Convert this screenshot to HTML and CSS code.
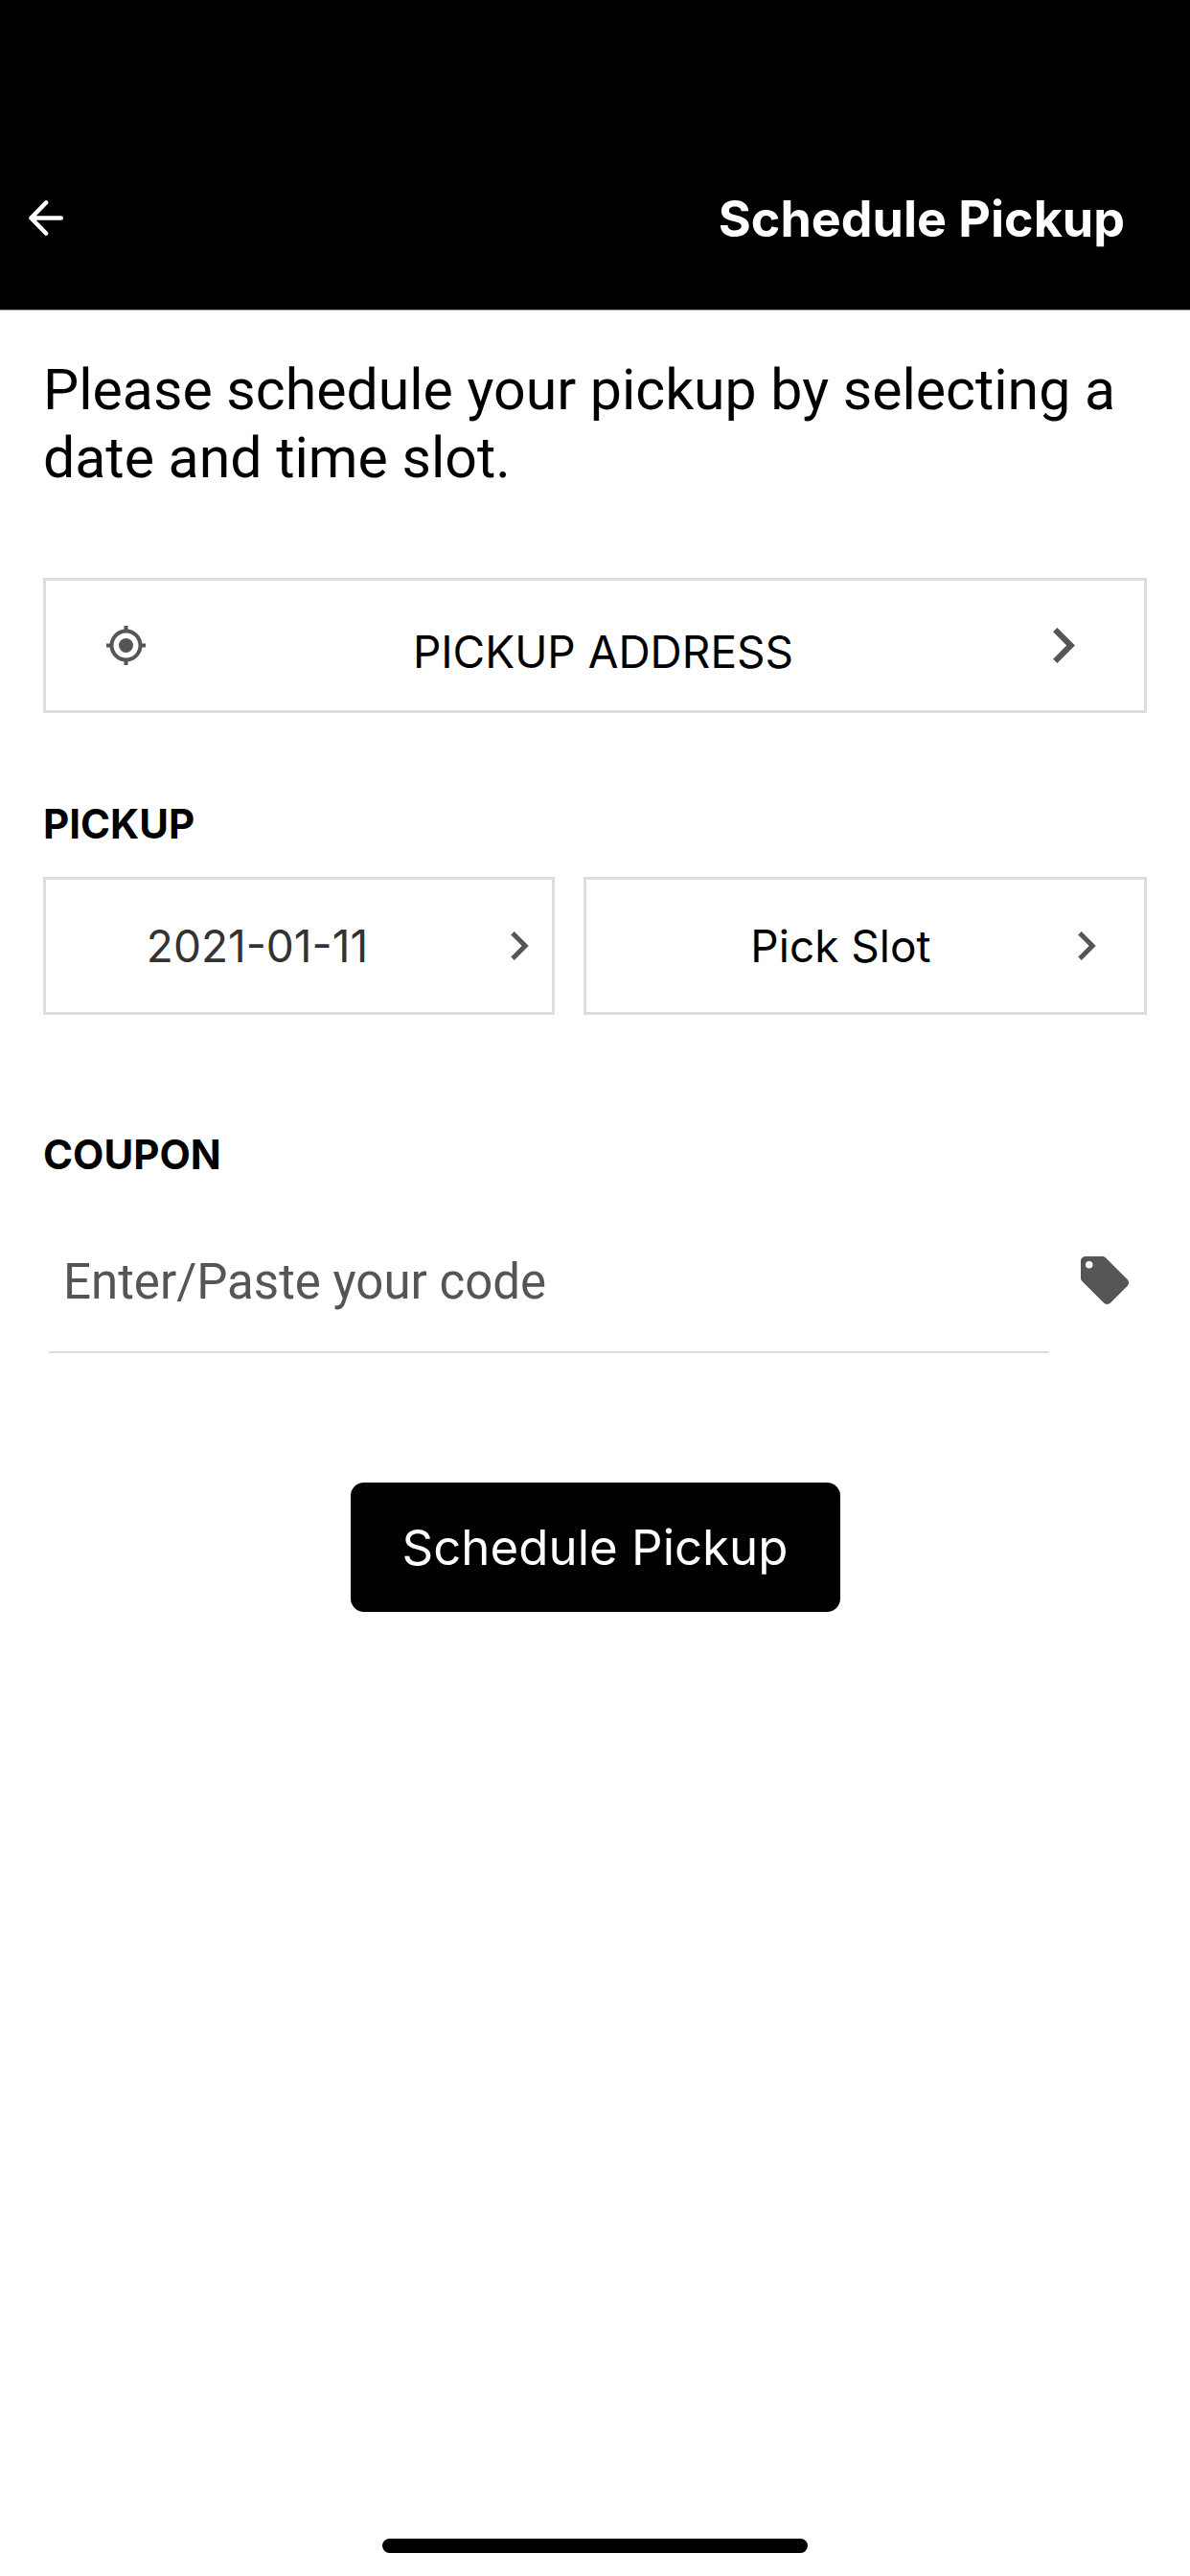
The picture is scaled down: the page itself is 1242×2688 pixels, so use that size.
FILE: index.html
```html
<!DOCTYPE html>
<html lang="en">
<head>
<meta charset="utf-8">
<meta name="viewport" content="width=device-width, initial-scale=1">
<title>Schedule Pickup</title>
<link rel="stylesheet" href="styles.css">
</head>
<body>
<header class="header">
  <button class="icon-button" type="button" aria-label="Back">
    <svg class="icon-back" viewBox="0 0 36 37" aria-hidden="true"><path d="M18 2.5 2.5 18.5 18 34.5M2.5 18.5H33.7"/></svg>
  </button>
  <h1 class="title">Schedule Pickup</h1>
</header>
<main class="content">
  <p class="intro">Please schedule your pickup by selecting a date and time slot.</p>
  <form class="form">
    <button class="picker picker-address" type="button">
      <svg class="icon-locate" viewBox="0 0 41 41" aria-hidden="true"><circle class="ring" cx="20.5" cy="20.5" r="15"/><circle cx="20.5" cy="20.5" r="7.5"/><path d="M18.5 0h4v5h-4zM18.5 36h4v5h-4zM0 18.5h5v4H0zM36 18.5h5v4h-5z"/></svg>
      <span class="picker-label">PICKUP ADDRESS</span>
      <svg class="chevron chevron-large" viewBox="8.59 6 7.41 12" aria-hidden="true"><path d="M8.59 16.59 13.17 12 8.59 7.41 10 6l6 6-6 6z"/></svg>
    </button>
    <section class="group">
      <h2 class="group-title">PICKUP</h2>
      <div class="slots">
        <button class="picker picker-date" type="button">
          <span class="picker-label">2021-01-11</span>
          <svg class="chevron" viewBox="8.59 6 7.41 12" aria-hidden="true"><path d="M8.59 16.59 13.17 12 8.59 7.41 10 6l6 6-6 6z"/></svg>
        </button>
        <button class="picker picker-slot" type="button">
          <span class="picker-label">Pick Slot</span>
          <svg class="chevron" viewBox="8.59 6 7.41 12" aria-hidden="true"><path d="M8.59 16.59 13.17 12 8.59 7.41 10 6l6 6-6 6z"/></svg>
        </button>
      </div>
    </section>
    <section class="group group-coupon">
      <h2 class="group-title"><label for="coupon">COUPON</label></h2>
      <div class="coupon">
        <input class="coupon-input" id="coupon" type="text" placeholder="Enter/Paste your code">
        <svg class="icon-tag" viewBox="2 2 20 20" aria-hidden="true"><path d="M5.5 7A1.5 1.5 0 0 1 4 5.5 1.5 1.5 0 0 1 5.5 4 1.5 1.5 0 0 1 7 5.5 1.5 1.5 0 0 1 5.5 7m15.91 4.58-9-9C12.05 2.22 11.55 2 11 2H4c-1.11 0-2 .89-2 2v7c0 .55.22 1.05.59 1.41l8.99 9c.37.36.87.59 1.42.59s1.05-.23 1.41-.59l7-7c.37-.36.59-.87.59-1.41 0-.56-.23-1.06-.59-1.42z"/></svg>
      </div>
    </section>
    <button class="submit" type="submit">Schedule Pickup</button>
  </form>
</main>
<footer class="home-area"><div class="home-bar"></div></footer>
</body>
</html>
```
FILE: styles.css
```css
* {
  box-sizing: border-box;
}

body {
  display: flex;
  flex-direction: column;
  min-height: 100vh;
  margin: 0;
  background: #fff;
  color: #000;
  font-family: Inter, "Liberation Sans", sans-serif;
}

button {
  padding: 0;
  border: 0;
  background: none;
  color: inherit;
  font: inherit;
  cursor: pointer;
}

svg {
  display: block;
  flex: none;
}

h1,
h2,
p {
  margin: 0;
}

/* Header */
.header {
  display: flex;
  justify-content: space-between;
  align-items: center;
  padding: 195px 68px 64px 30px;
  border-bottom: 1px solid #999;
  background: #000;
  color: #fff;
}

.title {
  padding-top: 4px;
  font-size: 52px;
  font-weight: 700;
  line-height: 60px;
}

.icon-back {
  width: 36px;
  height: 37px;
  fill: none;
  stroke: #fff;
  stroke-width: 4.6;
  stroke-linecap: round;
  stroke-linejoin: round;
}

/* Content */
.content {
  padding: 47px 45px;
}

.intro {
  font-family: Roboto, "Liberation Sans", sans-serif;
  font-size: 59px;
  line-height: 71px;
}

.form {
  display: flex;
  flex-direction: column;
  margin-top: 90px;
}

.picker {
  display: flex;
  align-items: center;
  height: 144px;
  border: 3px solid #ddd;
  font-size: 46px;
}

.picker-label {
  flex: 1;
}

.picker-address {
  height: 141px;
  padding: 0 72px 0 63px;
}

.picker-address .picker-label {
  padding: 12px 0 0 8px;
}

.picker-date {
  padding: 0 24px 0 0;
  color: #333;
}

.picker-date .picker-label {
  padding-right: 44px;
}

.picker-slot {
  padding: 0 50px 0 18px;
}

.chevron {
  width: 19px;
  height: 30px;
  fill: #555;
}

.chevron-large {
  width: 23px;
  height: 37px;
}

.icon-locate {
  width: 41px;
  height: 41px;
  fill: #555;
}

.ring {
  fill: none;
  stroke: #555;
  stroke-width: 4;
}

.group {
  margin-top: 90px;
}

.group-coupon {
  margin-top: 120px;
}

.group-title {
  font-size: 42px;
  font-weight: 700;
  line-height: 51px;
}

.slots {
  display: grid;
  grid-template-columns: 534fr 588fr;
  gap: 30px;
  margin-top: 30px;
}

.coupon {
  display: flex;
  align-items: center;
  gap: 33px;
  margin-top: 30px;
  padding: 0 19px 0 6px;
}

.coupon-input {
  flex: 1;
  min-width: 0;
  height: 152px;
  padding: 4px 15px 0;
  border: 0;
  border-bottom: 2px solid #ddd;
  background: none;
  color: #000;
  font-family: Roboto, "Liberation Sans", sans-serif;
  font-size: 51px;
}

.coupon-input::placeholder {
  color: #555;
  opacity: 1;
}

.icon-tag {
  width: 50px;
  height: 50px;
  fill: #555;
}

.submit {
  align-self: center;
  margin-top: 135px;
  padding: 35px 54px;
  border-radius: 14px;
  background: #000;
  color: #fff;
  font-size: 51px;
  line-height: 65px;
}

/* Home indicator */
.home-area {
  display: flex;
  justify-content: center;
  margin-top: auto;
  padding-bottom: 24px;
}

.home-bar {
  width: 444px;
  height: 15px;
  border-radius: 8px;
  background: #000;
}
```
